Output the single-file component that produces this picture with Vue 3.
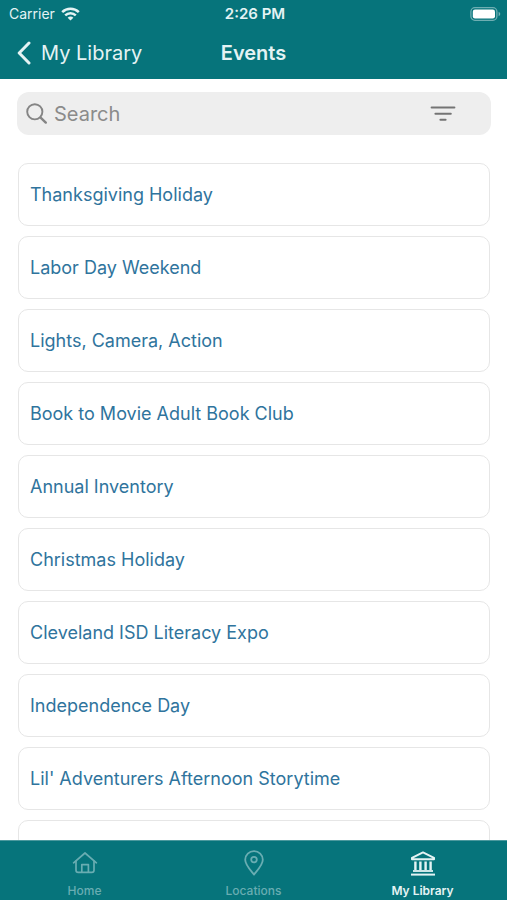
<script setup>
import { ref, computed } from 'vue'

const query = ref('')
const events = [
  'Thanksgiving Holiday',
  'Labor Day Weekend',
  'Lights, Camera, Action',
  'Book to Movie Adult Book Club',
  'Annual Inventory',
  'Christmas Holiday',
  'Cleveland ISD Literacy Expo',
  'Independence Day',
  "Lil' Adventurers Afternoon Storytime",
  '',
]
const visible = computed(() =>
  events.filter((name) => name.toLowerCase().includes(query.value.toLowerCase()))
)
</script>

<template>
  <div class="screen">
    <header class="top">
      <div class="status">
        <div class="carrier">
          <span>Carrier</span>
          <svg width="19" height="14" viewBox="0 0 19 14" fill="none" stroke="currentColor" stroke-width="2.5">
            <path d="M1.2 5.2C5.8.7 13.2.7 17.8 5.2" />
            <path d="M4.2 8.4c3-2.9 7.6-2.9 10.6 0" />
            <path d="M9.5 13.6 6.6 10.7c1.6-1.5 4.2-1.5 5.8 0z" fill="currentColor" stroke="none" />
          </svg>
        </div>
        <span class="time">2:26 PM</span>
        <svg class="battery" width="31" height="14" viewBox="0 0 31 14">
          <rect x="0.9" y="0.7" width="26" height="12.6" rx="4" fill="none" stroke="#fff" stroke-opacity="0.42" stroke-width="1.3" />
          <rect x="2.8" y="2.5" width="22.2" height="9" rx="2.2" fill="#fff" />
          <path d="M28.6 4.8c2.2.8 2.2 3.6 0 4.4z" fill="#fff" fill-opacity="0.45" />
        </svg>
      </div>
      <div class="bar">
        <button class="back" type="button">
          <svg width="15" height="24" viewBox="0 0 15 24" fill="none" stroke="currentColor" stroke-width="3" stroke-linecap="round" stroke-linejoin="round">
            <path d="M13 2 3.200 12 13 22" />
          </svg>
          <span>My Library</span>
        </button>
        <h1>Events</h1>
      </div>
    </header>

    <main class="content">
      <div class="search">
        <svg width="22" height="22" viewBox="0 0 22 22" fill="none" stroke="#858585" stroke-width="1.9" stroke-linecap="round">
          <circle cx="8.8" cy="8.8" r="7.6" />
          <path d="m14.6 14.6 5.200 5" stroke-width="2.4" />
        </svg>
        <input v-model="query" type="text" placeholder="Search" aria-label="Search" />
        <button class="filter" type="button" aria-label="Filter">
          <svg width="26" height="16" viewBox="0 0 26 16" fill="none" stroke="#747474" stroke-width="2" stroke-linecap="round">
            <path d="M1.6 1.6h22.8M5.4 7.8h15.4M10.4 13.8h5.2" />
          </svg>
        </button>
      </div>
      <ul class="events">
        <li v-for="(name, i) in visible" :key="i">
          <a class="card" href="#">{{ name }}</a>
        </li>
      </ul>
    </main>

    <nav class="tabs">
      <a class="tab" href="#">
        <svg width="26" height="26" viewBox="0 0 26 26" fill="none" stroke="currentColor" stroke-width="1.7" stroke-linecap="round" stroke-linejoin="round">
          <path d="M1.6 12.8 13 3l11.4 9.8" />
          <path d="M4 11v9.2Q4 22.4 6.2 22.4h13.6q2.2 0 2.2-2.2V11" />
          <path d="M9.8 22.2v-7.6h6.6v7.6" />
        </svg>
        <span>Home</span>
      </a>
      <a class="tab" href="#">
        <svg width="26" height="26" viewBox="0 0 26 26" fill="none" stroke="currentColor" stroke-width="1.8" stroke-linejoin="round">
          <path d="M13 24.6C10 20.8 4.2 15 4.2 9.8a8.8 8.6 0 0 1 17.6 0C21.8 15 16 20.8 13 24.6z" />
          <circle cx="13" cy="9.6" r="2.8" />
        </svg>
        <span>Locations</span>
      </a>
      <a class="tab active" href="#" aria-current="page">
        <svg width="26" height="26" viewBox="0 0 26 26" fill="none" stroke="currentColor" stroke-linejoin="round">
          <path d="M2 9.2V7.8L13 2.4l11 5.4v1.4z" stroke-width="2" />
          <path d="M5.4 11.400V20M10.400 11.400V20M15.600 11.400V20M20.600 11.400V20" stroke-width="2.400" />
          <path d="M3 21h20" stroke-width="1.800" />
          <path d="M1 24.600h24" stroke-width="2" />
        </svg>
        <span>My Library</span>
      </a>
    </nav>
  </div>
</template>

<style>
body {
  margin: 0;
  background: #fff;
}
</style>

<style scoped>
.screen {
  display: flex;
  flex-direction: column;
  height: 100vh;
  background: #fff;
  font-family: Inter, "Liberation Sans", sans-serif;
}
button {
  padding: 0;
  border: 0;
  background: none;
  color: inherit;
  font: inherit;
}
a {
  text-decoration: none;
}
svg {
  display: block;
  flex: none;
}
.top {
  flex: none;
  background: #06747b;
  color: #e4f3f4;
}
.status,
.bar {
  display: grid;
  grid-template-columns: 1fr auto 1fr;
  align-items: center;
}
.status {
  height: 27px;
  padding: 0 6px 0 9px;
}
.carrier {
  display: flex;
  align-items: center;
  gap: 6px;
  font-size: 14px;
}
.time {
  font-size: 15px;
  font-weight: 600;
}
.battery {
  justify-self: end;
}
.bar {
  height: 52px;
  padding: 0 16px;
}
.back {
  display: flex;
  align-items: center;
  gap: 10px;
  font-size: 20px;
}
h1 {
  margin: 0;
  font-size: 20px;
  font-weight: 600;
}
.content {
  flex: 1;
  min-height: 0;
  padding: 13px 16px 0 17px;
  overflow-y: auto;
  scrollbar-width: none;
}
.search {
  display: flex;
  align-items: center;
  gap: 6px;
  height: 43px;
  padding: 0 35px 0 9px;
  border-radius: 12px;
  background: #eee;
}
.search input {
  flex: 1;
  min-width: 0;
  padding: 0;
  border: 0;
  outline: 0;
  background: none;
  color: #444;
  font: inherit;
  font-size: 20px;
}
.search input::placeholder {
  color: #8b8b8b;
  opacity: 1;
}
.events {
  display: flex;
  flex-direction: column;
  gap: 10px;
  margin: 28px 1px 0;
  padding: 0 0 10px;
  list-style: none;
}
.card {
  display: block;
  min-height: 22px;
  padding: 20px 11px 19px;
  border: 1px solid #e6e6e6;
  border-radius: 10px;
  color: #2f749d;
  font-size: 18px;
  line-height: 22px;
}
.tabs {
  display: grid;
  grid-template-columns: repeat(3, 1fr);
  flex: none;
  height: 59px;
  border-top: 1px solid #4b999e;
  background: #06747b;
}
.tab {
  display: flex;
  flex-direction: column;
  align-items: center;
  gap: 7px;
  padding-top: 9px;
  color: #69adb2;
  font-size: 12px;
  font-weight: 500;
  line-height: 16px;
}
.tab.active {
  color: #e4f3f4;
  font-weight: 600;
}
</style>
